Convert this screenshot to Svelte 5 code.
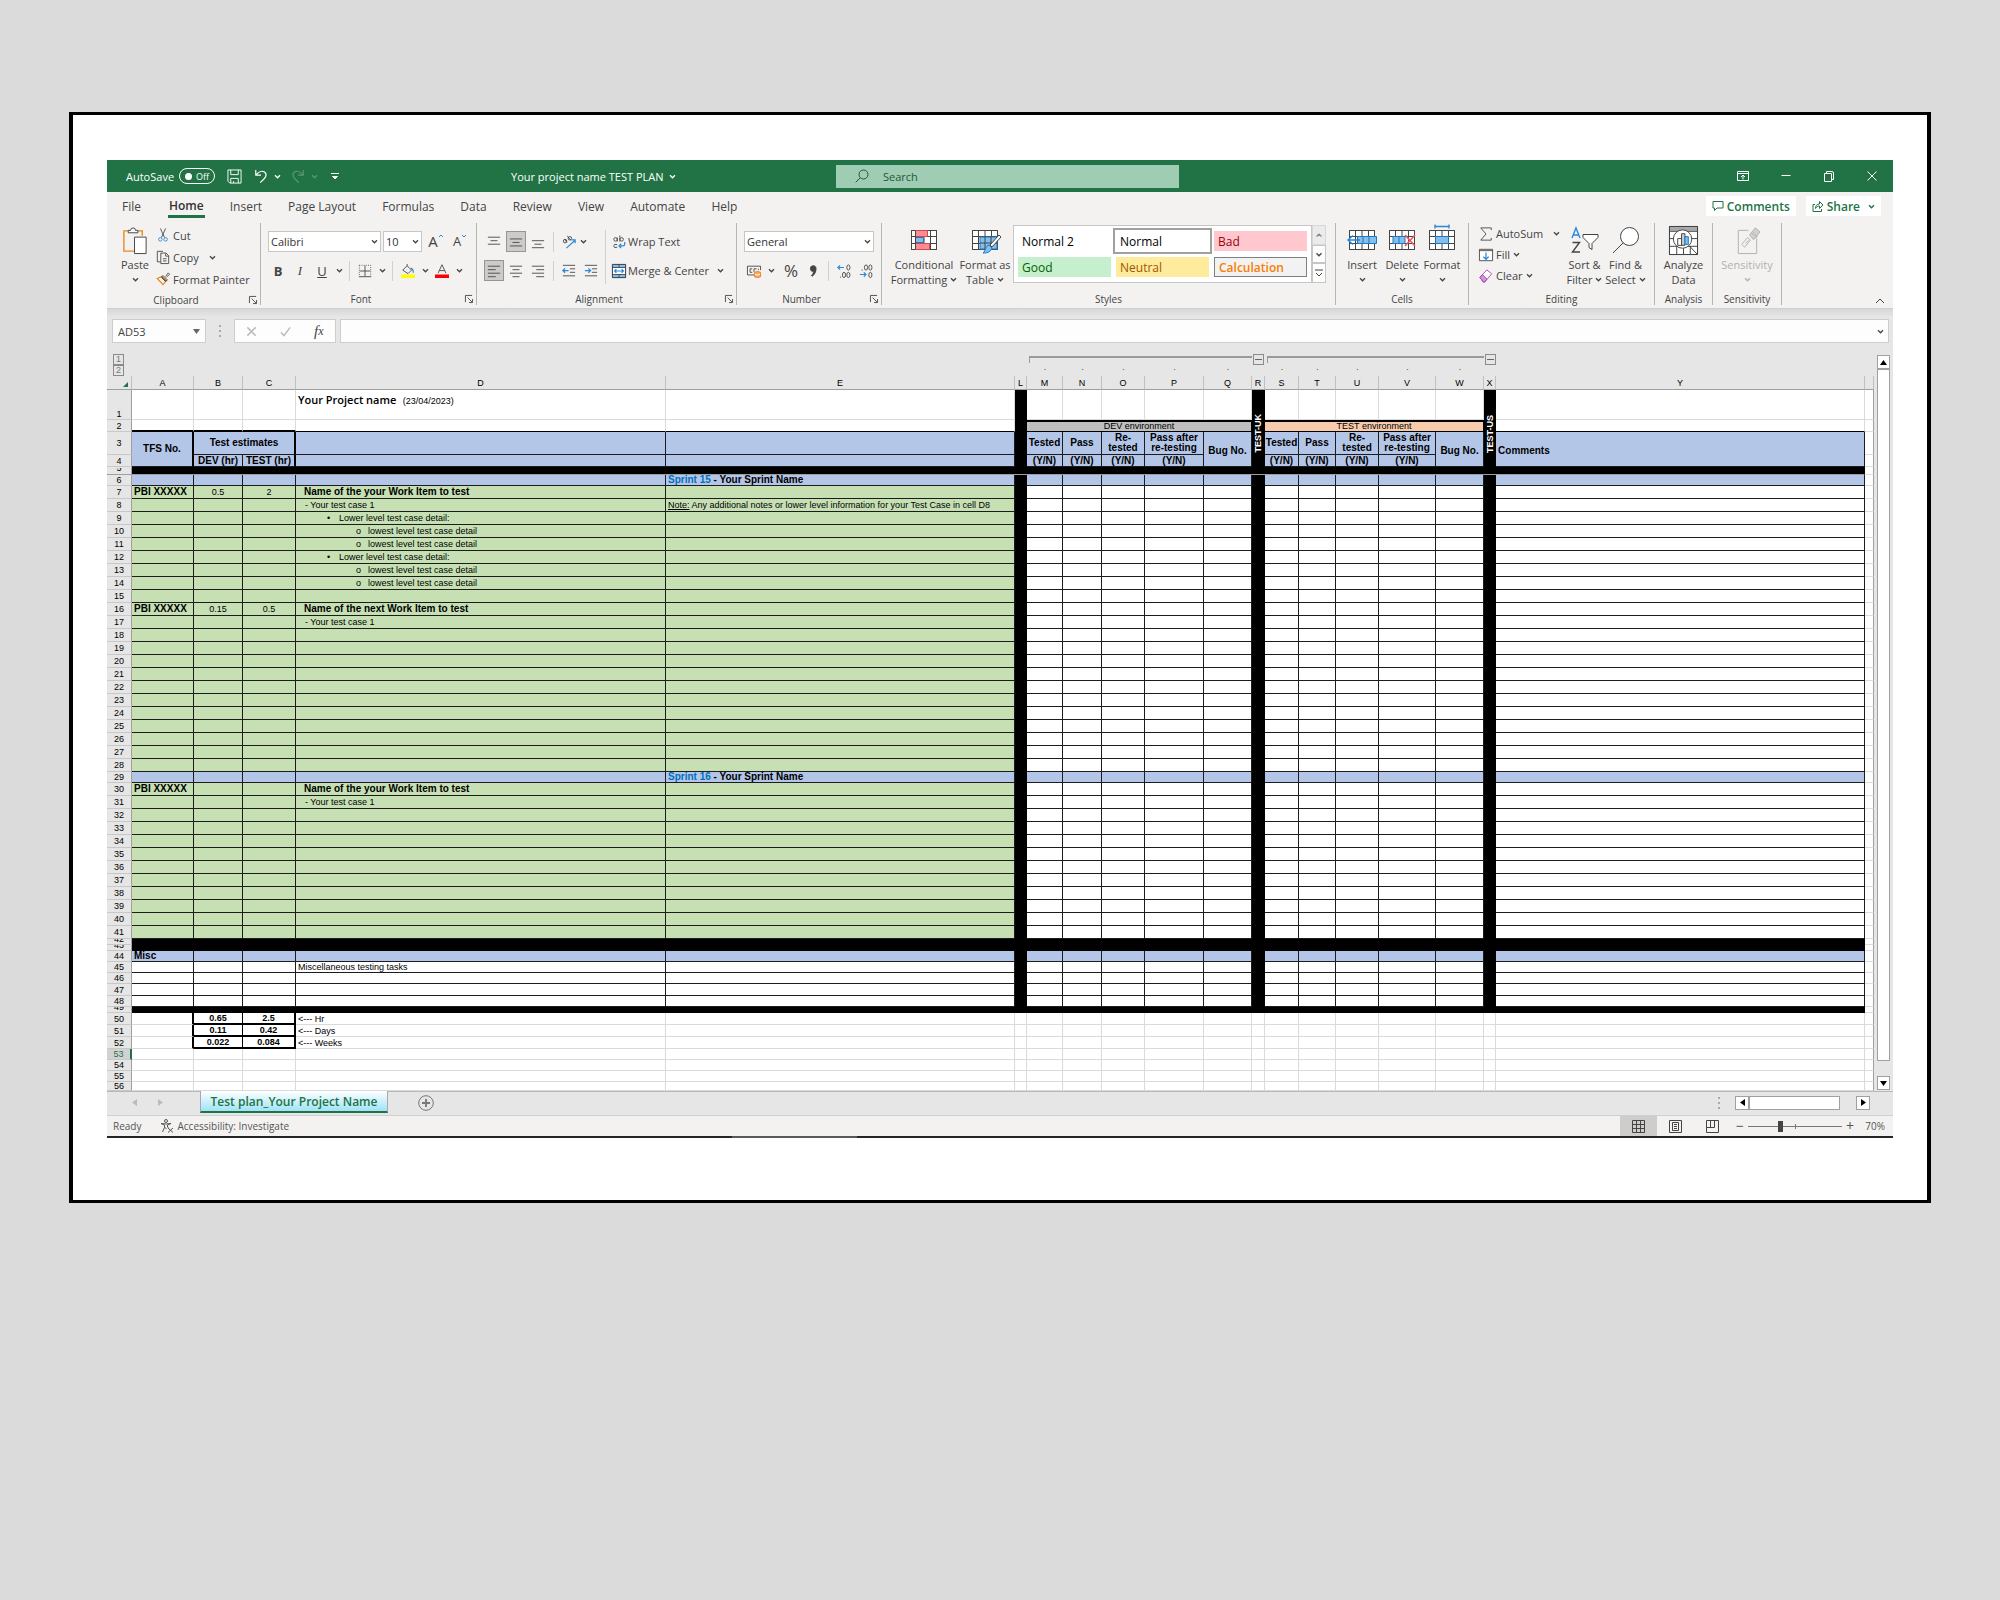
<!-- App.svelte -->
<script lang="ts">
  type Row = {
    n: number;
    h: number;
    kind: 'blue' | 'green' | 'white' | 'black' | 'plain' | 'total';
    id?: string;
    dev?: string;
    test?: string;
    text?: string;
    style?: 'name' | 'case' | 'lvl1' | 'lvl2';
    sprint?: string;
    note?: string;
  };

  const tabs = ['File', 'Home', 'Insert', 'Page Layout', 'Formulas', 'Data', 'Review', 'View', 'Automate', 'Help'];

  const columns = [
    { name: 'A', cls: 'w-a' },
    { name: 'B', cls: 'w-b' },
    { name: 'C', cls: 'w-c' },
    { name: 'D', cls: 'w-d' },
    { name: 'E', cls: 'w-e' },
    { name: 'L', cls: 'w-bar' },
    { name: 'M', cls: 'w-m' },
    { name: 'N', cls: 'w-n' },
    { name: 'O', cls: 'w-o' },
    { name: 'P', cls: 'w-p' },
    { name: 'Q', cls: 'w-q' },
    { name: 'R', cls: 'w-r' },
    { name: 'S', cls: 'w-s' },
    { name: 'T', cls: 'w-t' },
    { name: 'U', cls: 'w-u' },
    { name: 'V', cls: 'w-v' },
    { name: 'W', cls: 'w-q' },
    { name: 'X', cls: 'w-bar' },
    { name: 'Y', cls: 'w-y' },
    { name: '', cls: 'w-z' }
  ];

  // Columns L to Y as drawn in every body row; bars are the solid dividers
  const rightCells = ['bar', '', '', '', '', '', 'bar', '', '', '', '', '', 'bar', ''];

  const content: Record<number, Partial<Row>> = {
    6: { kind: 'blue', h: 11, sprint: 'Sprint 15' },
    7: { id: 'PBI XXXXX', dev: '0.5', test: '2', text: 'Name of the your Work Item to test', style: 'name' },
    8: { text: '- Your test case 1', style: 'case', note: 'Any additional notes or lower level information for your Test Case in cell D8' },
    9: { text: 'Lower level test case detail:', style: 'lvl1' },
    10: { text: 'lowest level test case detail', style: 'lvl2' },
    11: { text: 'lowest level test case detail', style: 'lvl2' },
    12: { text: 'Lower level test case detail:', style: 'lvl1' },
    13: { text: 'lowest level test case detail', style: 'lvl2' },
    14: { text: 'lowest level test case detail', style: 'lvl2' },
    16: { id: 'PBI XXXXX', dev: '0.15', test: '0.5', text: 'Name of the next Work Item to test', style: 'name' },
    17: { text: '- Your test case 1', style: 'case' },
    29: { kind: 'blue', h: 11, sprint: 'Sprint 16' },
    30: { id: 'PBI XXXXX', text: 'Name of the your Work Item to test', style: 'name' },
    31: { text: '- Your test case 1', style: 'case' },
    42: { kind: 'black', h: 6 },
    43: { kind: 'black', h: 6 },
    44: { kind: 'blue', h: 11, id: 'Misc' },
    45: { kind: 'white', h: 11, text: 'Miscellaneous testing tasks' },
    46: { kind: 'white', h: 11 },
    47: { kind: 'white', h: 12 },
    48: { kind: 'white', h: 11 },
    49: { kind: 'black', h: 6 },
    50: { kind: 'total', h: 12, dev: '0.65', test: '2.5', text: '<--- Hr' },
    51: { kind: 'total', h: 12, dev: '0.11', test: '0.42', text: '<--- Days' },
    52: { kind: 'total', h: 12, dev: '0.022', test: '0.084', text: '<--- Weeks' },
    53: { kind: 'plain', h: 11 },
    54: { kind: 'plain', h: 11 },
    55: { kind: 'plain', h: 11 },
    56: { kind: 'plain', h: 9 }
  };

  const rows: Row[] = Array.from({ length: 51 }, (_, i) => ({
    n: i + 6,
    h: 13,
    kind: 'green',
    ...content[i + 6]
  }));

  const envs = [
    { name: 'DEV environment', cls: 'dev' },
    { name: 'TEST environment', cls: 'test' }
  ];

  let activeTab = $state('Home');
  let search = $state('');
  let formula = $state('');
  let cellName = $state('AD53');
  let zoom = $state(70);
</script>

{#snippet chev()}
  <svg class="chev" viewBox="0 0 8 6"><path d="M1 1.5 4 4.5 7 1.5" /></svg>
{/snippet}

{#snippet lines(kind: string)}
  <svg class="ico" viewBox="0 0 16 16">
    {#if kind === 'top'}
      <path d="M1 2.5h14M4 6.5h8M1 10.5h14" />
    {:else if kind === 'middle'}
      <path d="M1 4.5h14M4 8.5h8M1 12.5h14" />
    {:else if kind === 'bottom'}
      <path d="M1 6.500h14M4 10.500h8M1 14.500h14" />
    {:else if kind === 'left'}
      <path d="M1 2.500h14M1 6.500h9M1 10.500h14M1 14.500h9" />
    {:else if kind === 'center'}
      <path d="M1 2.500h14M4 6.500h8M1 10.500h14M4 14.500h8" />
    {:else}
      <path d="M1 2.500h14M6 6.500h9M1 10.500h14M6 14.500h9" />
    {/if}
  </svg>
{/snippet}

{#snippet indent(out: boolean)}
  <svg class="ico" viewBox="0 0 16 16">
    <path d="M1 1.500h14M9 5.500h6M9 9.500h6M1 13.500h14" />
    {#if out}
      <path class="blue thick" d="M7.500 7.500H1M3.500 5 1 7.500 3.500 10" />
    {:else}
      <path class="blue thick" d="M1 7.500h6.500M5 5l2.500 2.500L5 10" />
    {/if}
  </svg>
{/snippet}

{#snippet grid()}
  <path class="fillw" d="M.5.500h25v19H.5z" />
  <path d="M.5.500h25v19H.5zM.5 6.500h25M.5 13.500h25M6.500.500v19M13 .500v19M19.500.500v19" />
{/snippet}

{#snippet label(text: string, launcher: boolean)}
  <div class="group-label">
    <span>{text}</span>
    {#if launcher}
      <button class="launcher" aria-label="{text} settings">
        <svg viewBox="0 0 9 9"><path d="M.5 8V.500H8M3 3l5 5M8.500 4.500v4h-4" /></svg>
      </button>
    {/if}
  </div>
{/snippet}

<main class="frame">
  <div class="window">
    <header class="titlebar">
      <div class="quick">
        <span>AutoSave</span>
        <button class="toggle"><i></i>Off</button>
        <button class="save" aria-label="Save">
          <svg viewBox="0 0 16 16"><path d="M1 1h14v14H3l-2-2zM4 1v5h8V1M4 15v-5h8v5M7 15v-2" /></svg>
        </button>
        <button class="undo" aria-label="Undo">
          <svg viewBox="0 0 16 16"><path d="M2 1v6h6M2.500 6.500C5 3.500 9 1.500 12 3.500c3.500 2.500 2 6-5 12" /></svg>
          {@render chev()}
        </button>
        <button class="undo dim" aria-label="Redo">
          <svg viewBox="0 0 16 16"><path d="M14 1v6H8M13.500 6.500C11 3.500 7 1.500 4 3.500c-3.500 2.500-2 6 5 12" /></svg>
          {@render chev()}
        </button>
        <button class="qat" aria-label="Customize toolbar">
          <svg viewBox="0 0 8 8"><path d="M0 1.500h8M1.500 4.500 4 7l2.500-2.500z" /></svg>
        </button>
      </div>
      <button class="doc">Your project name TEST PLAN {@render chev()}</button>
      <label class="search">
        <svg viewBox="0 0 14 14"><circle cx="8.500" cy="5.500" r="4.500" /><path d="M5.300 8.700.7 13.300" /></svg>
        <input type="text" placeholder="Search" aria-label="Search" bind:value={search} />
      </label>
      <div class="controls">
        <button aria-label="Ribbon options">
          <svg viewBox="0 0 12 12"><path d="M.5 1.500h11v9H.5zM.5 3.500h11M6 9.500V5M4 7l2-2 2 2" /></svg>
        </button>
        <button aria-label="Minimize"><svg viewBox="0 0 12 12"><path d="M1.500 5.500h9" /></svg></button>
        <button aria-label="Restore">
          <svg viewBox="0 0 12 12"><path d="M1.500 3.500h7v8h-7zM3.500 3V1.500H9q1.500 0 1.500 1.500v6.500H9" /></svg>
        </button>
        <button aria-label="Close"><svg viewBox="0 0 12 12"><path d="M1.500 1.500l9 9M10.500 1.500l-9 9" /></svg></button>
      </div>
    </header>

    <nav class="tabs">
      {#each tabs as tab (tab)}
        <button class:active={tab === activeTab} onclick={() => (activeTab = tab)}>{tab}</button>
      {/each}
      <div class="share-area">
        <button class="share">
          <svg viewBox="0 0 12 12"><path d="M1 1.500h10v6.500H5L2.500 10.500V8H1z" /></svg>
          Comments
        </button>
        <button class="share">
          <svg viewBox="0 0 12 12"><path d="M3 4.500H1v7h8.500V9M3.500 8.500c0-3 1.500-4.500 4-4.500V1.500L11 5 7.500 8.500V6c-2 0-3 1-4 2.500z" /></svg>
          Share
          {@render chev()}
        </button>
      </div>
    </nav>

    <section class="ribbon">
      <div class="group clipboard">
        <div class="body">
          <button class="big paste">
            <svg class="i30" viewBox="0 0 26 30">
              <path class="orange thick" d="M6 5H1.500v21H12M16 5h4.500v5" />
              <path class="fillw" d="M6 7V4.500h2.500a2.500 2.500 0 0 1 5 0H16V7z" />
              <path class="fillw" d="M12.500 11.500h12v17h-12z" />
            </svg>
            <span>Paste</span>
            {@render chev()}
          </button>
          <div class="stack">
            <button class="line">
              <svg class="ico" viewBox="0 0 16 16">
                <path d="M5 .5 9.800 11M11 .5 6.200 11" />
                <circle class="blue" cx="5" cy="13" r="2" /><circle class="blue" cx="11" cy="13" r="2" />
              </svg>
              Cut
            </button>
            <button class="line">
              <svg class="ico" viewBox="0 0 16 16">
                <path d="M5 13.500H1.500V1.500H8M5.500 3.500h6l3 3v9h-9zM11 4v3h3.500M8 10h4M8 12.500h4" />
              </svg>
              Copy <span class="gap"></span>{@render chev()}
            </button>
            <button class="line">
              <svg class="ico" viewBox="0 0 16 16">
                <path class="orange thick" d="M1.500 7.500 8 14.500l4-5L7 5z" />
                <path d="M6 6l5 5M8 4l5 5-1.500 1.500L6.500 5.500zM11 5l3-4 1.500 1.500L12 6" />
              </svg>
              Format Painter
            </button>
          </div>
        </div>
        {@render label('Clipboard', true)}
      </div>

      <div class="group font">
        <div class="body two">
          <div class="bar-row">
            <div class="pick family">
              <select aria-label="Font"><option>Calibri</option></select>
              {@render chev()}
            </div>
            <div class="pick size">
              <select aria-label="Font size"><option>10</option></select>
              {@render chev()}
            </div>
            <button class="tool grow" aria-label="Increase font size">A<svg viewBox="0 0 6 4"><path class="blue" d="M1 3l2-2 2 2" /></svg></button>
            <button class="tool shrink" aria-label="Decrease font size">A<svg viewBox="0 0 6 4"><path class="blue" d="M1 1l2 2 2-2" /></svg></button>
          </div>
          <div class="bar-row">
            <button class="tool bold">B</button>
            <button class="tool italic">I</button>
            <button class="tool under">U</button>
            <button class="drop" aria-label="Underline style">{@render chev()}</button>
            <i class="sep"></i>
            <button class="tool" aria-label="Borders">
              <svg class="ico" viewBox="0 0 16 16">
                <path class="dots" d="M1.500 1.500h13v12.500M1.500 1.500V14" />
                <path d="M1 14.500h14M8 2v12M2 8h12" />
              </svg>
            </button>
            <button class="drop" aria-label="Border style">{@render chev()}</button>
            <i class="sep"></i>
            <button class="tool" aria-label="Fill color">
              <svg class="ico" viewBox="0 0 16 16">
                <path d="M2 7l5-5 5 5-4 4zM7 2V0" /><path class="blue thick" d="M11 5q3 0 3 5" />
                <path class="yellow" d="M0 12h16v4H0z" />
              </svg>
            </button>
            <button class="drop" aria-label="Fill color list">{@render chev()}</button>
            <button class="tool" aria-label="Font color">
              <svg class="ico" viewBox="0 0 16 16">
                <path d="M3.500 10.500 8 .8l4.500 9.700M5 7.500h6" /><path class="red" d="M0 12h16v4H0z" />
              </svg>
            </button>
            <button class="drop" aria-label="Font color list">{@render chev()}</button>
          </div>
        </div>
        {@render label('Font', true)}
      </div>

      <div class="group align">
        <div class="body">
          <div class="two">
            <div class="bar-row">
              <button class="tool" aria-label="Top align">{@render lines('top')}</button>
              <button class="tool on" aria-label="Middle align">{@render lines('middle')}</button>
              <button class="tool" aria-label="Bottom align">{@render lines('bottom')}</button>
              <i class="sep"></i>
              <button class="tool" aria-label="Orientation">
                <svg class="ico" viewBox="0 0 16 16">
                  <circle cx="3.500" cy="7" r="2" /><path d="M5.500 8.500 3 4.500M6 1l4 5" /><circle cx="9" cy="3.800" r="2" />
                  <path class="blue thick" d="M5 15 15 6M11 5.500h4v4" />
                </svg>
              </button>
              <button class="drop" aria-label="Orientation list">{@render chev()}</button>
            </div>
            <div class="bar-row">
              <button class="tool on" aria-label="Align left">{@render lines('left')}</button>
              <button class="tool" aria-label="Center">{@render lines('center')}</button>
              <button class="tool" aria-label="Align right">{@render lines('right')}</button>
              <i class="sep"></i>
              <button class="tool" aria-label="Decrease indent">{@render indent(true)}</button>
              <button class="tool" aria-label="Increase indent">{@render indent(false)}</button>
            </div>
          </div>
          <i class="sep tall"></i>
          <div class="two">
            <button class="line">
              <svg class="ico" viewBox="0 0 16 16">
                <circle cx="4" cy="5" r="2" /><path d="M6 3v4.500M9 .5v7M6 11q-4-1.500-4 1.500t4 1.500" /><circle cx="11" cy="5" r="2" />
                <path class="blue thick" d="M14.500 8v2.500q0 2-2 2H8M10.500 10 8 12.500l2.500 2.500" />
              </svg>
              Wrap Text
            </button>
            <button class="line">
              <svg class="ico" viewBox="0 0 16 16">
                <path class="fillb" d="M.5.500h15v15H.5z" /><path class="fillw nos" d="M1 4h14v8H1z" />
                <path d="M.5.500h15v15H.5zM.5 4h15M.5 12h15M8 .5V4M8 12v3.500" />
                <path class="blue thick" d="M3 8h10M5 6 3 8l2 2M11 6l2 2-2 2" />
              </svg>
              Merge &amp; Center <span class="gap"></span>{@render chev()}
            </button>
          </div>
        </div>
        {@render label('Alignment', true)}
      </div>

      <div class="group number">
        <div class="body two">
          <div class="pick general">
            <select aria-label="Number format"><option>General</option></select>
            {@render chev()}
          </div>
          <div class="bar-row">
            <button class="tool" aria-label="Accounting format">
              <svg class="ico" viewBox="0 0 16 16">
                <path d="M8 12.500H.5v-10h15V7M6 5.500H3.500v4H6M8 9V5.500h3M13 5.500v1.500" />
                <path class="fillo" d="M8.500 9.500q3.500-2 7 0v5q-3.500 2-7 0z" /><path class="white" d="M9 11.800q3 1.500 6 0" />
              </svg>
            </button>
            <button class="drop" aria-label="Accounting list">{@render chev()}</button>
            <button class="tool percent">%</button>
            <button class="tool comma" aria-label="Comma style">
              <svg class="ico" viewBox="0 0 16 16"><path class="dark" d="M8 2a3 3 0 0 1 3.500 3c0 4-1.500 7-4.500 9l-.8-1C8 11.500 8.500 10 8.500 8.500A3.200 3.200 0 0 1 8 2z" /></svg>
            </button>
            <i class="sep"></i>
            <button class="tool" aria-label="Increase decimal">
              <svg class="ico" viewBox="0 0 16 16">
                <path class="blue thick" d="M8 4H1M3.500 1.500 1 4l2.500 2.500" /><ellipse cx="13" cy="4" rx="1.800" ry="3" />
                <ellipse cx="8" cy="12.500" rx="1.800" ry="3" /><ellipse cx="13" cy="12.500" rx="1.800" ry="3" /><path d="M3.500 15h1.200" />
              </svg>
            </button>
            <button class="tool" aria-label="Decrease decimal">
              <svg class="ico" viewBox="0 0 16 16">
                <path class="blue thick" d="M1 12h7M5.500 9.500 8 12l-2.500 2.500" /><ellipse cx="8" cy="4" rx="1.800" ry="3" />
                <ellipse cx="13" cy="4" rx="1.800" ry="3" /><ellipse cx="13" cy="12.500" rx="1.800" ry="3" /><path d="M3 7h1.200" />
              </svg>
            </button>
          </div>
        </div>
        {@render label('Number', true)}
      </div>

      <div class="group styles">
        <div class="body">
          <button class="big wide">
            <svg class="i20" viewBox="0 0 26 20">
              {@render grid()}
              <path class="fillp" d="M4.500.500h12v6h-12zM4.500 13.500h14v6h-14z" /><path class="fillb" d="M4.500 7.500h8v5h-8z" />
              <path d="M4.500.500v19" />
            </svg>
            <span>Conditional</span>
            <span>Formatting {@render chev()}</span>
          </button>
          <button class="big">
            <svg class="i20" viewBox="0 0 26 20">
              {@render grid()}
              <path class="fillb" d="M8 7h17v12H8z" /><path d="M13 7v12M19 7v12M8 13h17" />
              <path class="fillw" d="M27 5 18 15l2 2 9-10z" /><path class="fillb" d="M17 15l3 3c-2 5-6 5-9 5 3-2 2-7 6-8z" />
            </svg>
            <span>Format as</span>
            <span>Table {@render chev()}</span>
          </button>
          <div class="gallery">
            <button>Normal 2</button>
            <button class="picked">Normal</button>
            <button class="bad">Bad</button>
            <button class="good">Good</button>
            <button class="neutral">Neutral</button>
            <button class="calc">Calculation</button>
          </div>
          <div class="gallery-nav">
            <button class="dim" aria-label="Previous styles"><svg class="chev" viewBox="0 0 8 6"><path d="M1 4.200 4 1.500 7 4.200" /></svg></button>
            <button aria-label="Next styles">{@render chev()}</button>
            <button aria-label="More styles"><svg viewBox="0 0 8 8"><path d="M0 1h8M1 4l3 3 3-3" /></svg></button>
          </div>
        </div>
        {@render label('Styles', false)}
      </div>

      <div class="group cells">
        <div class="body">
          <button class="big">
            <svg class="i20" viewBox="0 0 26 20">{@render grid()}<path class="fillb" d="M8.500 6.500h19v7h-19zM14 6.500v7M20 6.500v7" /><path class="blue thick" d="M11 10H-1M4 5.500-1 10l5 4.500" /></svg>
            <span>Insert</span>
            {@render chev()}
          </button>
          <button class="big">
            <svg class="i20" viewBox="0 0 26 20">{@render grid()}<path class="fillb" d="M4 6.500h12v7H4zM10 6.500v7" /><path class="cross" d="M16 5l10 11M26 5 16 16" /></svg>
            <span>Delete</span>
            {@render chev()}
          </button>
          <button class="big">
            <svg class="i20" viewBox="0 0 26 20">{@render grid()}<path class="fillb" d="M6.500 6.500h13v7h-13z" /><path class="blue thick" d="M6-3.500h14M6-5.500v4M20-5.500v4" /></svg>
            <span>Format</span>
            {@render chev()}
          </button>
        </div>
        {@render label('Cells', false)}
      </div>

      <div class="group editing">
        <div class="body">
          <div class="stack">
            <button class="line">
              <svg class="ico" viewBox="0 0 16 16"><path d="M14 3.500V1H2l6 7-6 7h12v-2.500" /></svg>
              AutoSum <span class="gap"></span>{@render chev()}
            </button>
            <button class="line">
              <svg class="ico" viewBox="0 0 16 16"><path class="fillw" d="M.5 1.500h15v13H.5z" /><path d="M.5 3h15" /><path class="blue thick" d="M8 5v8M5 10l3 3 3-3" /></svg>
              Fill {@render chev()}
            </button>
            <button class="line">
              <svg class="ico" viewBox="0 0 16 16"><path class="erase" d="M1 9.500 9 1l5.500 4.500-8 9.500H5z" /><path class="eraser" d="M1 9.500 4 6.500l5 5-3 3.500H5z" /></svg>
              Clear {@render chev()}
            </button>
          </div>
          <button class="big">
            <svg class="i26" viewBox="0 0 28 26">
              <path class="blue thick" d="M1 11 5 1l4 10M2.500 8h5" /><path class="thick" d="M1.500 15.500h7L1.500 25h7.500" />
              <path class="fillw" d="M12 7.500h15v3l-6 6v6l-3-2v-4l-6-6z" />
            </svg>
            <span>Sort &amp;</span>
            <span>Filter {@render chev()}</span>
          </button>
          <button class="big">
            <svg class="i26" viewBox="0 0 28 26"><circle class="fillw" cx="17.500" cy="9.500" r="9" /><path d="M11 16 1 26" /></svg>
            <span>Find &amp;</span>
            <span>Select {@render chev()}</span>
          </button>
        </div>
        {@render label('Editing', false)}
      </div>

      <div class="group analysis">
        <div class="body">
          <button class="big">
            <svg class="i30" viewBox="0 0 30 30">
              <path class="fillw" d="M.5.500h29v29H.5z" /><path class="grey" d="M1 1h28v4H1z" />
              <path d="M.5.500h29v29H.5zM.5 5.500h29M.5 13h29M.5 21h29M8 21v8M15 21v8M22 21v8" />
              <circle class="fillw" cx="14" cy="13.500" r="9.500" /><path d="M21 20.500l8 8.500" />
              <path class="fillw" d="M9 13h4v7H9z" /><path class="fillg" d="M13 8h3.500v12H13z" /><path class="fillb" d="M16.500 11H20v8h-3.500z" />
            </svg>
            <span>Analyze</span>
            <span>Data</span>
          </button>
        </div>
        {@render label('Analysis', false)}
      </div>

      <div class="group sensitivity">
        <div class="body">
          <button class="big" disabled>
            <svg class="i30" viewBox="0 0 30 30">
              <path d="M16 4.500H5.500v24h19V13" /><path d="M9 19l6-7 3 2.500-6 7.500zM13 18l3-3" />
              <path class="fillg" d="M19 7l4-5 5 4-4 5zM17 9l4 5 4-3-5-5z" />
            </svg>
            <span>Sensitivity</span>
            {@render chev()}
          </button>
        </div>
        {@render label('Sensitivity', false)}
      </div>

      <button class="collapse" aria-label="Collapse ribbon"><svg viewBox="0 0 10 6"><path d="M1 5l4-4 4 4" /></svg></button>
    </section>

    <section class="formula-bar">
      <div class="name-box">
        <input type="text" aria-label="Name box" bind:value={cellName} />
        <svg viewBox="0 0 7 5"><path d="M0 0h7L3.500 5z" /></svg>
      </div>
      <i class="grip"></i>
      <div class="fx">
        <button aria-label="Cancel"><svg viewBox="0 0 12 12"><path d="M1.500 1.500l9 9M10.500 1.500l-9 9" /></svg></button>
        <button aria-label="Enter"><svg viewBox="0 0 12 12"><path d="M1 7l3.500 3.500L11 1.500" /></svg></button>
        <button class="fn"><i>f</i><small>x</small></button>
      </div>
      <div class="formula">
        <input type="text" aria-label="Formula" bind:value={formula} />
        {@render chev()}
      </div>
    </section>

    <section class="sheet">
      <table>
        <colgroup>
          <col class="w-head" />
          {#each columns as col (col.name)}
            <col class={col.cls} />
          {/each}
        </colgroup>
        <thead>
          <tr class="outline">
            <td><button class="level">1</button></td>
            <td colspan="6"></td>
            <td colspan="5"><div class="bracket"></div></td>
            <td><button class="minus" aria-label="Collapse M to Q"></button></td>
            <td colspan="5"><div class="bracket"></div></td>
            <td><button class="minus" aria-label="Collapse S to W"></button></td>
            <td colspan="2"></td>
          </tr>
          <tr class="outline">
            <td><button class="level">2</button></td>
            {#each columns as col (col.name)}
              <td class="dot">{'MNOPQSTUVW'.includes(col.name) && col.name ? '.' : ''}</td>
            {/each}
          </tr>
          <tr class="letters">
            <th><svg viewBox="0 0 5 5"><path d="M5 0v5H0z" /></svg></th>
            {#each columns as col (col.name)}
              <th>{col.name}</th>
            {/each}
          </tr>
        </thead>
        <tbody>
          <tr class="r1 plain">
            <th class="num">1</th>
            <td></td><td></td><td></td>
            <td class="project"><b>Your Project name</b> (23/04/2023)</td>
            <td></td>
            <td class="bar"></td>
            <td></td><td></td><td></td><td></td><td></td>
            <td class="bar side" rowspan="3"><span>TEST-UK</span></td>
            <td></td><td></td><td></td><td></td><td></td>
            <td class="bar side" rowspan="3"><span>TEST-US</span></td>
            <td></td><td class="edge"></td>
          </tr>
          <tr class="r2 plain">
            <th class="num">2</th>
            <td class="under2"></td><td class="under2"></td><td class="under2"></td><td class="under1"></td><td class="under1"></td>
            <td class="bar"></td>
            {#each envs as env (env.name)}
              <td class="env {env.cls}" colspan="5">{env.name}</td>
            {/each}
            <td class="under1"></td><td class="edge"></td>
          </tr>
          <tr class="r3 head">
            <th class="num">3</th>
            <td class="thick-r" rowspan="2">TFS No.</td>
            <td class="thick-r" colspan="2">Test estimates</td>
            <td></td><td></td>
            <td class="bar"></td>
            {#each envs as env (env.name)}
              <td>Tested</td><td>Pass</td><td>Re-<br />tested</td><td>Pass after<br />re-testing</td>
              <td class="low" rowspan="2">Bug No.</td>
            {/each}
            <td class="low comments" rowspan="2">Comments</td>
            <td class="edge"></td>
          </tr>
          <tr class="r4 head">
            <th class="num">4</th>
            <td>DEV (hr)</td><td class="thick-r">TEST (hr)</td><td></td><td></td>
            <td class="bar"></td>
            <td>(Y/N)</td><td>(Y/N)</td><td>(Y/N)</td><td>(Y/N)</td>
            <td class="bar"></td>
            <td>(Y/N)</td><td>(Y/N)</td><td>(Y/N)</td><td>(Y/N)</td>
            <td class="bar"></td>
            <td class="edge"></td>
          </tr>
          <tr class="r5 black">
            <th class="num"><div>5</div></th>
            <td colspan="19"></td>
            <td class="edge"></td>
          </tr>
          {#each rows as row (row.n)}
            <tr class={row.kind} style="height: {row.h}px">
              <th class="num" class:current={row.n === 53} class:last={row.n === 56}>
                {#if row.kind === 'black'}<div>{row.n}</div>{:else}{row.n}{/if}
              </th>
              {#if row.kind === 'black'}
                <td colspan="19"></td>
              {:else}
                <td class="id">{row.id ?? ''}</td>
                <td class="val">{row.dev ?? ''}</td>
                <td class="val">{row.test ?? ''}</td>
                <td class={row.style}>{row.text ?? ''}</td>
                <td>
                  {#if row.sprint}<b><span class="sprint">{row.sprint}</span> - Your Sprint Name</b>{/if}
                  {#if row.note}<u>Note:</u> {row.note}{/if}
                </td>
                {#each rightCells as cell}
                  <td class={cell}></td>
                {/each}
              {/if}
              <td class="edge"></td>
            </tr>
          {/each}
        </tbody>
      </table>
      <div class="vscroll">
        <button aria-label="Scroll up"><svg viewBox="0 0 7 5"><path d="M0 5h7L3.500 0z" /></svg></button>
        <div class="thumb"></div>
        <button aria-label="Scroll down"><svg viewBox="0 0 7 5"><path d="M0 0h7L3.500 5z" /></svg></button>
      </div>
    </section>

    <footer class="sheet-tabs">
      <button class="arrow" aria-label="Previous sheet"><svg viewBox="0 0 5 7"><path d="M5 0v7L0 3.500z" /></svg></button>
      <button class="arrow" aria-label="Next sheet"><svg viewBox="0 0 5 7"><path d="M0 0v7l5-3.500z" /></svg></button>
      <button class="sheet-tab">Test plan_Your Project Name</button>
      <button class="add" aria-label="New sheet">
        <svg viewBox="0 0 16 16"><circle cx="8" cy="8" r="7.300" /><path class="plus" d="M4 8h8M8 4v8" /></svg>
      </button>
      <i class="grip"></i>
      <div class="hscroll">
        <button aria-label="Scroll left"><svg viewBox="0 0 5 7"><path d="M5 0v7L0 3.500z" /></svg></button>
        <div class="thumb"></div>
        <button aria-label="Scroll right"><svg viewBox="0 0 5 7"><path d="M0 0v7l5-3.500z" /></svg></button>
      </div>
    </footer>

    <footer class="status">
      <span class="ready">Ready</span>
      <button class="access">
        <svg viewBox="0 0 14 14"><circle cx="6" cy="2" r="1.500" /><path d="M1 4.500 4.500 6v2.500L2.500 13M11 4.500 7.500 6v2l1 1M1 4.500 6 5l5-.5M8 9l5 4.500M13 9l-5 4.500M4.500 8.500l2 1" /></svg>
        Accessibility: Investigate
      </button>
      <div class="views">
        <button class="on" aria-label="Normal view"><svg viewBox="0 0 13 13"><path d="M.5.500h12v12H.5zM.5 4.500h12M.5 8.500h12M4.500.500v12M8.500.500v12" /></svg></button>
        <button aria-label="Page layout view"><svg viewBox="0 0 13 13"><path d="M.5.500h12v12H.5zM3.500 2.500h6v8h-6zM5 4.500h3M5 6.500h3M5 8.500h3" /></svg></button>
        <button aria-label="Page break view"><svg viewBox="0 0 13 13"><path d="M.5.500h12v12H.5zM4.500.500v7M8.500.500v7M.5 7.500h8" /></svg></button>
      </div>
      <button class="step">−</button>
      <input class="zoom" type="range" min="10" max="190" aria-label="Zoom" bind:value={zoom} />
      <button class="step">+</button>
      <span class="percent-text">{zoom}%</span>
    </footer>
  </div>
</main>

<style>
  :global(body) {
    background: #dbdbdb;
  }

  .frame {
    margin: 112px 69px 0;
    padding: 45px 34px 62px;
    border: solid #000;
    border-width: 3px 4px;
    background: #fff;
    font-family: 'Open Sans', 'Noto Sans', sans-serif;
    font-size: 11px;
    color: #444;
  }

  .window {
    background: #e6e6e6;
  }

  button,
  input,
  select {
    margin: 0;
    padding: 0;
    border: 0;
    border-radius: 0;
    background: none;
    font: inherit;
    color: inherit;
    min-width: 0;
  }

  button {
    display: flex;
    align-items: center;
    justify-content: center;
    white-space: nowrap;
  }

  svg {
    display: block;
    flex: none;
    overflow: visible;
    fill: none;
    stroke: #444;
    stroke-width: 1;
  }

  .chev {
    width: 7px;
    height: 5px;
    stroke-width: 1.6;
  }

  .ico {
    width: 14px;
    height: 14px;
  }

  .blue { stroke: #2b88d8; }
  .orange { stroke: #e8871e; }
  .thick { stroke-width: 1.4; }
  .dots { stroke-dasharray: 1 1.500; }
  .cross { stroke: #f0555b; stroke-width: 1.6; }
  .white { stroke: #fff; }
  .yellow { fill: #ff0; stroke: none; }
  .red { fill: #f00; stroke: none; }
  .dark { fill: #444; }
  .grey { fill: #a8a8a8; stroke: none; }
  .fillw { fill: #fff; }
  .nos { stroke: none; }
  .fillb { fill: #83beec; stroke: #1e78c0; }
  .fillp { fill: #ff8a8f; stroke: #d1484d; }
  .fillo { fill: #f5ac62; stroke: #e8781e; }
  .fillg { fill: #d0d0d0; }
  .erase { fill: #fff; stroke: #a33fb0; }
  .eraser { fill: #d690dd; stroke: #a33fb0; }

  /* Title bar */
  .titlebar {
    display: flex;
    align-items: center;
    height: 32px;
    background: #217346;
    color: #fff;
  }

  .titlebar svg {
    stroke: #fff;
  }

  .quick {
    display: flex;
    align-items: center;
    width: 385px;
    padding-left: 19px;
  }

  .toggle {
    gap: 4px;
    width: 36px;
    height: 16px;
    margin-left: 5px;
    border: 1px solid #fff;
    border-radius: 8px;
    font-size: 9px;
  }

  .toggle i {
    width: 7px;
    height: 7px;
    border-radius: 50%;
    background: #fff;
  }

  .save {
    margin: 0 12px;
  }

  .save svg {
    width: 15px;
    height: 15px;
  }

  .undo {
    gap: 6px;
    margin-right: 10px;
  }

  .undo > svg:first-child {
    width: 14px;
    height: 14px;
    stroke-width: 1.3;
  }

  .titlebar .dim {
    opacity: 0.25;
  }

  .qat {
    margin-left: 3px;
  }

  .qat svg {
    width: 8px;
    height: 8px;
    fill: #fff;
  }

  .doc {
    justify-content: flex-start;
    gap: 5px;
    width: 190px;
    margin-right: 135px;
  }

  .search {
    display: flex;
    align-items: center;
    gap: 14px;
    width: 324px;
    height: 23px;
    padding-left: 19px;
    background: #9fcdb3;
    color: #185c37;
  }

  .titlebar .search svg {
    width: 14px;
    height: 14px;
    stroke: #185c37;
  }

  .search input {
    flex: 1;
  }

  .search input::placeholder {
    color: #185c37;
    opacity: 1;
  }

  .controls {
    display: flex;
    margin-left: auto;
  }

  .controls button {
    width: 43px;
    height: 32px;
  }

  .controls svg {
    width: 12px;
    height: 12px;
  }

  /* Tabs */
  .tabs {
    display: flex;
    align-items: flex-start;
    height: 31px;
    padding-left: 2px;
    background: #f3f2f1;
    font-size: 12px;
  }

  .tabs > button {
    height: 28px;
    padding: 0 13px;
  }

  .tabs > .active {
    height: 26px;
    margin: 0 12px 0 14px;
    padding: 3px 1px 0;
    box-sizing: border-box;
    border-bottom: 3px solid #217346;
    color: #333;
    font-weight: 600;
  }

  .share-area {
    display: flex;
    gap: 10px;
    margin: 4px 12px 0 auto;
  }

  .share {
    gap: 3px;
    height: 20px;
    padding: 0 6px;
    background: #fff;
    color: #217346;
    font-weight: 600;
  }

  .share svg {
    width: 12px;
    height: 12px;
    stroke: #217346;
  }

  .share .chev {
    width: 7px;
    height: 5px;
    margin-left: 5px;
  }

  /* Ribbon */
  .ribbon {
    display: flex;
    height: 86px;
    background: #f3f2f1;
    border-bottom: 1px solid #cfcfcf;
    box-sizing: border-box;
  }

  .group {
    flex: none;
    display: flex;
    flex-direction: column;
    height: 82px;
    box-sizing: border-box;
    border-right: 1px solid #b5b5b5;
  }

  .body {
    display: flex;
    height: 70px;
  }

  .group-label {
    display: flex;
    align-items: center;
    height: 12px;
    line-height: 12px;
    padding-top: 4px;
    font-size: 10px;
  }

  .group-label span {
    flex: 1;
    text-align: center;
  }

  .launcher {
    width: 15px;
  }

  .launcher svg {
    width: 8px;
    height: 8px;
  }

  .two {
    display: flex;
    flex-direction: column;
    gap: 8px;
    padding-top: 8px;
    box-sizing: border-box;
  }

  .bar-row {
    display: flex;
    align-items: center;
    gap: 2px;
    height: 21px;
  }

  .tool {
    width: 20px;
    height: 21px;
    box-sizing: border-box;
    font-size: 13px;
  }

  .tool.on {
    background: #cdcbc9;
    border: 1px solid #979593;
  }

  .drop {
    width: 12px;
    height: 21px;
    margin: 0 -1px;
  }

  .sep {
    width: 1px;
    height: 20px;
    margin: 0 3px;
    background: #d2d0ce;
  }

  .tall {
    height: 54px;
    margin: 7px 3px 0 4px;
  }

  .stack {
    display: flex;
    flex-direction: column;
  }

  .line {
    justify-content: flex-start;
    gap: 3px;
    height: 22px;
  }

  .gap {
    width: 4px;
  }

  .big {
    flex-direction: column;
    justify-content: flex-start;
    padding-top: 3px;
    line-height: 15px;
  }

  .big span {
    display: flex;
    align-items: center;
    gap: 3px;
  }

  .big > .chev {
    margin-top: 5px;
  }

  .i20 { width: 26px; height: 20px; margin: 4px 0 7px; }
  .i26 { width: 28px; height: 26px; margin: 1px 0 4px; }
  .i30 { width: 29px; height: 29px; margin-bottom: 2px; }

  .clipboard {
    width: 154px;
  }

  .clipboard .body {
    padding-left: 7px;
  }

  .clipboard .stack {
    padding-top: 1px;
  }

  .paste {
    width: 42px;
  }

  .paste .i30 {
    width: 26px;
  }

  .font {
    width: 216px;
  }

  .font .body,
  .number .body {
    padding-left: 7px;
  }

  .align {
    width: 260px;
  }

  .align .body {
    padding-left: 7px;
  }

  .align .drop {
    margin-left: -4px;
  }

  .align .line {
    gap: 2px;
    height: 21px;
    padding-left: 3px;
  }

  .pick {
    display: grid;
    align-items: center;
    height: 21px;
    box-sizing: border-box;
    border: 1px solid #c8c6c4;
    background: #fff;
    color: #333;
  }

  .pick select,
  .pick svg {
    grid-area: 1 / 1;
  }

  .pick select {
    appearance: none;
    padding-left: 2px;
  }

  .pick svg {
    justify-self: end;
    margin-right: 2px;
    pointer-events: none;
  }

  .family { width: 113px; }
  .size { width: 39px; }
  .general { width: 130px; }

  .grow,
  .shrink {
    align-items: flex-start;
    line-height: 20px;
  }

  .grow {
    font-size: 15px;
    margin: 0 2px;
  }

  .grow svg,
  .shrink svg {
    width: 6px;
    height: 4px;
    margin-top: 3px;
  }

  .bold { font-weight: 700; }
  .italic { font-family: 'Liberation Serif', serif; font-style: italic; }
  .under { text-decoration: underline; }
  .percent { font-size: 17px; margin-left: 3px; }

  .number {
    width: 145px;
  }

  .styles {
    width: 454px;
  }

  .styles .body {
    padding-left: 9px;
  }

  .styles .big {
    width: 56px;
  }

  .styles .wide {
    width: 66px;
  }

  .gallery {
    display: grid;
    grid-template-columns: repeat(3, 93px);
    grid-auto-rows: 20px;
    gap: 6px 5px;
    height: 58px;
    margin-top: 2px;
    padding: 5px 4px;
    border: 1px solid #c8c6c4;
    box-sizing: border-box;
    background: #fff;
    color: #000;
    font-size: 12px;
  }

  .gallery button {
    justify-content: flex-start;
    padding-left: 4px;
    box-sizing: border-box;
  }

  .picked { outline: 2px solid #a0a0a0; outline-offset: 1px; }
  .bad { background: #ffc7ce; color: #9c0006; }
  .good { background: #c6efce; color: #006100; }
  .neutral { background: #ffeb9c; color: #9c5700; }

  .gallery .calc {
    background: #f2f2f2;
    color: #fa7d00;
    border: 1px solid #7f7f7f;
    font-weight: 600;
  }

  .gallery-nav {
    display: grid;
    grid-template-rows: 20px 18px 20px;
    width: 14px;
    height: 58px;
    margin-top: 2px;
  }

  .gallery-nav button {
    border: 1px solid #c8c6c4;
    background: #fdfdfd;
  }

  .gallery-nav button svg {
    width: 8px;
  }

  .gallery-nav .dim {
    background: #e8e8e8;
    opacity: 0.6;
  }

  .cells {
    width: 133px;
  }

  .cells .body {
    padding-left: 6px;
  }

  .cells .big {
    width: 40px;
  }

  .editing {
    width: 186px;
  }

  .editing .body {
    padding-left: 10px;
  }

  .editing .stack {
    width: 85px;
  }

  .editing .line {
    height: 21px;
  }

  .editing .big {
    width: 41px;
  }

  .analysis { width: 58px; }
  .sensitivity { width: 69px; }

  .analysis .body,
  .sensitivity .body {
    justify-content: center;
  }

  .big:disabled {
    color: #b1b1b1;
  }

  .big:disabled svg {
    stroke: #b1b1b1;
  }

  .collapse {
    align-self: flex-end;
    margin: 0 8px 4px auto;
  }

  .collapse svg {
    width: 10px;
    height: 6px;
  }

  /* Formula bar */
  .formula-bar {
    display: flex;
    height: 34px;
    padding: 10px 4px 0 5px;
    box-sizing: border-box;
    background: linear-gradient(#d8d8d8, #e6e6e6 8px);
  }

  .name-box,
  .fx,
  .formula {
    display: flex;
    align-items: center;
    height: 24px;
    box-sizing: border-box;
    border: 1px solid #cdcdcd;
    background: #fdfdfd;
  }

  .name-box {
    width: 94px;
    padding: 0 5px;
  }

  .name-box svg {
    width: 7px;
    height: 5px;
    fill: #666;
    stroke: none;
  }

  .name-box input,
  .formula input {
    flex: 1;
  }

  .grip {
    width: 2px;
    height: 12px;
    margin: 6px 13px;
    background: repeating-linear-gradient(#aaa 0 2px, transparent 2px 5px);
  }

  .fx {
    width: 102px;
    margin-right: 4px;
    justify-content: space-around;
  }

  .fx svg {
    width: 11px;
    height: 11px;
    stroke: #bbb;
    stroke-width: 1.6;
  }

  .fn {
    font-family: 'Liberation Serif', serif;
    font-size: 15px;
    font-style: italic;
  }

  .fn small {
    font-size: 12px;
  }

  .formula {
    flex: 1;
    padding-right: 4px;
  }

  /* Sheet */
  .sheet {
    display: flex;
    padding-top: 11px;
    font-family: 'Liberation Sans', Arial, sans-serif;
    font-size: 9px;
    color: #000;
  }

  table {
    flex: 1;
    width: 0;
    table-layout: fixed;
    border-collapse: separate;
    border-spacing: 0;
    line-height: 10px;
  }

  .w-head { width: 25px; }
  .w-a { width: 62px; }
  .w-b { width: 49px; }
  .w-c { width: 53px; }
  .w-d { width: 370px; }
  .w-e { width: 349px; }
  .w-bar { width: 12px; }
  .w-m { width: 36px; }
  .w-n { width: 39px; }
  .w-o { width: 43px; }
  .w-p { width: 59px; }
  .w-q { width: 48px; }
  .w-r { width: 13px; }
  .w-s { width: 34px; }
  .w-t { width: 37px; }
  .w-u { width: 43px; }
  .w-v { width: 57px; }
  .w-z { width: 9px; }

  th,
  td {
    padding: 0;
    box-sizing: border-box;
    overflow: hidden;
    white-space: nowrap;
    font-weight: 400;
    text-align: left;
    border: 0 solid #1c1c1c;
  }

  td {
    padding-left: 2px;
    border-right-width: 1px;
    border-bottom-width: 1px;
  }

  .outline {
    height: 11px;
  }

  .outline td {
    overflow: visible;
    border: 0;
    padding: 0;
  }

  .outline button {
    box-sizing: border-box;
    width: 11px;
    height: 11px;
    border: 1px solid #8a8a8a;
    color: #777;
    line-height: 9px;
  }

  .outline .level {
    margin-left: 6px;
  }

  .outline .minus {
    margin: 0 auto;
    background: linear-gradient(#666, #666) center / 7px 1px no-repeat;
  }

  .bracket {
    height: 5px;
    margin-left: 2px;
    border: solid #9a9a9a;
    border-width: 2px 0 0 1px;
  }

  .outline .dot {
    text-align: center;
    line-height: 4px;
    vertical-align: top;
    color: #444;
  }

  .letters {
    height: 14px;
  }

  .letters th {
    text-align: center;
    border-right: 1px solid #c0c0c0;
    border-bottom: 1px solid #9f9f9f;
  }

  .letters svg {
    width: 5px;
    height: 5px;
    margin: 4px 3px 0 auto;
    fill: #217346;
    stroke: none;
  }

  .num {
    text-align: center;
    background: #e6e6e6;
    border-right: 1px solid #9f9f9f;
    border-bottom: 1px solid #c8c8c8;
  }

  .num div {
    display: flex;
    align-items: flex-end;
    justify-content: center;
    height: 5px;
    overflow: hidden;
  }

  .last {
    line-height: 8px;
  }

  .current {
    background: #d2d2d2;
    color: #217346;
    border-right: 2px solid #217346;
  }

  .plain td,
  .total td {
    background: #fff;
    border-color: #dadada;
  }

  .black td {
    background: #000;
    border-color: #000;
  }

  .blue td { background: #b4c6e7; }
  .green td { background: #c6e0b4; }
  .white td { background: #fff; }
  .green .bar ~ td { background: #fff; }

  .r1 .bar,
  .r2 .bar,
  .head .bar,
  .blue .bar,
  .green .bar,
  .green .bar ~ .bar,
  .white .bar {
    padding: 0;
    background: #000;
    border-color: #000;
  }

  .r1 { height: 30px; }
  .r2 { height: 12px; }
  .r3 { height: 23px; }
  .r4 { height: 12px; }
  .r5 { height: 8px; }

  .r1 .num {
    vertical-align: bottom;
  }

  .plain .project {
    padding-top: 3px;
    vertical-align: top;
  }

  .project b {
    margin-right: 4px;
    font-family: 'Open Sans', sans-serif;
    font-size: 11px;
    font-weight: 600;
    line-height: 13px;
  }

  .side {
    vertical-align: bottom;
  }

  .side span {
    display: block;
    margin: 0 auto 1px;
    writing-mode: vertical-rl;
    transform: rotate(180deg);
    color: #fff;
    font-weight: 700;
    line-height: 12px;
  }

  .r2 .under2 { border-bottom: 2px solid #000; }
  .r2 .under1 { border-bottom: 1px solid #000; }

  .r2 .env {
    padding: 0;
    border: solid #000;
    border-width: 2px 1px 1px 0;
    text-align: center;
    line-height: 9px;
  }

  .r2 .dev { background: #bfbfbf; }
  .r2 .test { background: #f8cbad; }

  .head td {
    padding: 0;
    text-align: center;
    font-size: 10px;
    font-weight: 700;
  }

  .head td:not(.bar) {
    background: #b4c6e7;
  }

  .head .thick-r {
    border-right: 2px solid #000;
  }

  .head .low {
    padding-top: 3px;
  }

  .head .comments {
    padding-left: 2px;
    text-align: left;
  }

  .r5 td,
  .r5 .num {
    border-bottom: 1px solid #9f9f9f;
  }

  tbody tr .edge:last-child,
  .green .bar ~ .edge {
    background: #fff;
    padding: 0;
    border-color: #dcdcdc #a0a0a0 #dcdcdc #dcdcdc;
  }

  .id,
  td b {
    font-size: 10px;
    font-weight: 700;
  }

  .val {
    padding: 0;
    text-align: center;
  }

  .total .id {
    border-right: 2px solid #000;
  }

  .total .val {
    border: solid #000;
    border-width: 0 1px 2px 0;
    font-weight: 700;
  }

  .total .val + .val {
    border-right-width: 2px;
  }

  .name {
    padding-left: 8px;
    font-weight: 700;
    font-size: 10px;
  }

  .case {
    padding-left: 9px;
  }

  .lvl1::before,
  .lvl2::before {
    content: '•';
    display: inline-block;
    width: 12px;
  }

  .lvl2::before {
    content: 'o';
  }

  .lvl1 { padding-left: 31px; }
  .lvl2 { padding-left: 60px; }

  .sprint {
    color: #0070c0;
  }

  .vscroll {
    display: flex;
    flex-direction: column;
    width: 13px;
    margin: 1px 3px 1px;
    font-size: 0;
  }

  .vscroll button,
  .hscroll button,
  .thumb {
    box-sizing: border-box;
    border: 1px solid #a0a0a0;
    background: #fff;
  }

  .vscroll button {
    height: 14px;
  }

  .vscroll svg {
    width: 7px;
    height: 5px;
    fill: #000;
    stroke: none;
  }

  .vscroll .thumb {
    flex: 1;
    margin-bottom: 15px;
  }

  /* Sheet tabs and status */
  .sheet-tabs {
    display: flex;
    align-items: center;
    height: 25px;
    padding-bottom: 2px;
    box-sizing: border-box;
    border-top: 1px solid #b8b8b8;
    border-bottom: 1px solid #d0d0d0;
  }

  .arrow {
    width: 26px;
  }

  .arrow:first-child {
    margin-left: 14px;
  }

  .arrow svg,
  .hscroll svg {
    width: 5px;
    height: 7px;
    fill: #bbb;
    stroke: none;
  }

  .sheet-tab {
    align-self: flex-start;
    width: 188px;
    height: 22px;
    margin: -1px 0 0 27px;
    box-sizing: border-box;
    border: solid #a8a8a8;
    border-width: 0 1px;
    border-bottom: 2px solid #217346;
    background: linear-gradient(#fff, #9fe3f7);
    color: #217346;
    font-size: 12px;
    font-weight: 600;
  }

  .add {
    margin-left: 30px;
  }

  .add svg {
    width: 16px;
    height: 16px;
    stroke: #777;
  }

  .plus {
    stroke-width: 1.8;
  }

  .sheet-tabs .grip {
    margin: 0 15px 0 auto;
  }

  .hscroll {
    display: flex;
    width: 135px;
    height: 14px;
    margin-right: 23px;
  }

  .hscroll button {
    width: 14px;
  }

  .hscroll svg {
    fill: #000;
  }

  .hscroll .thumb {
    flex: 1;
    margin-right: 16px;
  }

  .status {
    display: flex;
    align-items: center;
    height: 22px;
    padding: 0 8px 2px 6px;
    box-sizing: border-box;
    background:
      linear-gradient(90deg, #262626 35%, #5a5a5a 35% 42%, #262626 42%) bottom / 100% 2px no-repeat,
      #f3f2f1;
    font-size: 10px;
    color: #555;
  }

  .access {
    gap: 3px;
    margin-left: 19px;
  }

  .access svg {
    width: 14px;
    height: 14px;
    stroke: #555;
  }

  .views {
    display: flex;
    align-self: stretch;
    margin: 0 1px 0 auto;
  }

  .views button {
    width: 37px;
  }

  .views .on {
    background: #cfcdcb;
  }

  .views svg {
    width: 13px;
    height: 13px;
  }

  .step {
    width: 16px;
    font-size: 14px;
    line-height: 12px;
  }

  .zoom {
    appearance: none;
    width: 94px;
    height: 12px;
    background:
      linear-gradient(#777, #777) center / 1px 5px no-repeat,
      linear-gradient(#777, #777) center / 100% 1px no-repeat;
  }

  .zoom::-webkit-slider-thumb {
    appearance: none;
    width: 5px;
    height: 11px;
    background: #444;
  }

  .percent-text {
    width: 27px;
    text-align: right;
  }
</style>
